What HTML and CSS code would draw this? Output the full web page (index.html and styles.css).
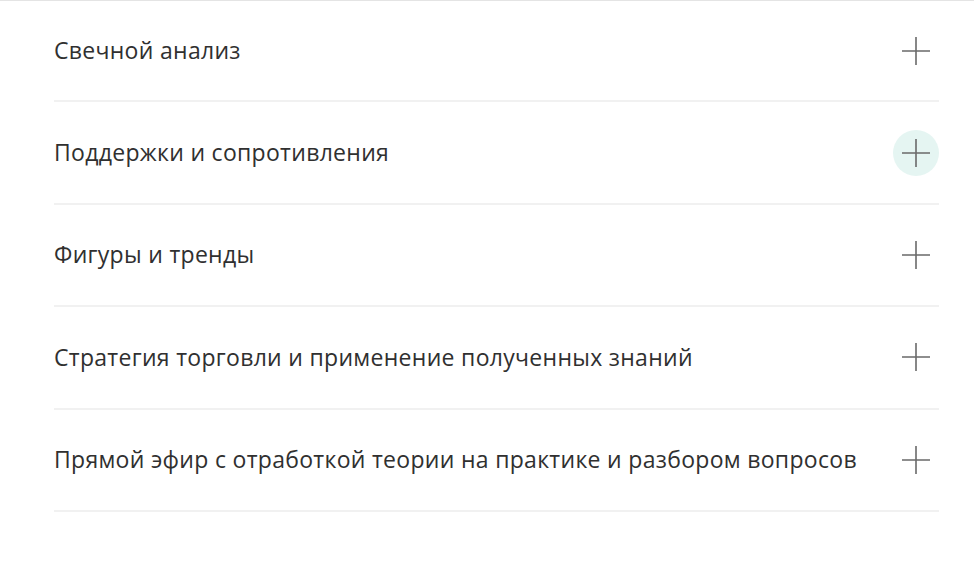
FILE: index.html
```html
<!DOCTYPE html>
<html lang="ru">
<head>
<meta charset="utf-8">
<link rel="stylesheet" href="styles.css">
</head>
<body>
<div class="page">
  <ul class="acc">
    <li class="item"><span class="title">Свечной анализ</span><span class="btn"><svg viewBox="0 0 30 30" width="30" height="30"><path d="M1 15H29M15 1V29"/></svg></span></li>
    <li class="item"><span class="title">Поддержки и сопротивления</span><span class="btn active"><svg viewBox="0 0 30 30" width="30" height="30"><path d="M1 15H29M15 1V29"/></svg></span></li>
    <li class="item"><span class="title">Фигуры и тренды</span><span class="btn"><svg viewBox="0 0 30 30" width="30" height="30"><path d="M1 15H29M15 1V29"/></svg></span></li>
    <li class="item"><span class="title">Стратегия торговли и применение полученных знаний</span><span class="btn"><svg viewBox="0 0 30 30" width="30" height="30"><path d="M1 15H29M15 1V29"/></svg></span></li>
    <li class="item"><span class="title">Прямой эфир с отработкой теории на практике и разбором вопросов</span><span class="btn"><svg viewBox="0 0 30 30" width="30" height="30"><path d="M1 15H29M15 1V29"/></svg></span></li>
  </ul>
</div>
</body>
</html>
```
FILE: styles.css
```css
html, body {
  margin: 0;
  padding: 0;
  background: #fff;
}
.page {
  border-top: 1px solid #e4e4e4;
  padding: 0 35px 0 54px;
  font-family: "Open Sans", sans-serif;
  color: #303030;
}
.acc {
  list-style: none;
  margin: 0;
  padding: 0;
}
.item {
  display: flex;
  align-items: center;
  justify-content: space-between;
  height: 100.4px;
  border-bottom: 2px solid #f1f1f1;
}
.item:first-child {
  height: 99.4px;
}
.title {
  font-size: 23px;
  letter-spacing: 0.3px;
  line-height: 1;
}
.btn {
  width: 46px;
  height: 46px;
  border-radius: 50%;
  display: flex;
  align-items: center;
  justify-content: center;
}
.btn.active {
  background: #e5f5f2;
}
.btn svg {
  stroke: #6a6a6a;
  stroke-width: 1.6;
  fill: none;
}
```
